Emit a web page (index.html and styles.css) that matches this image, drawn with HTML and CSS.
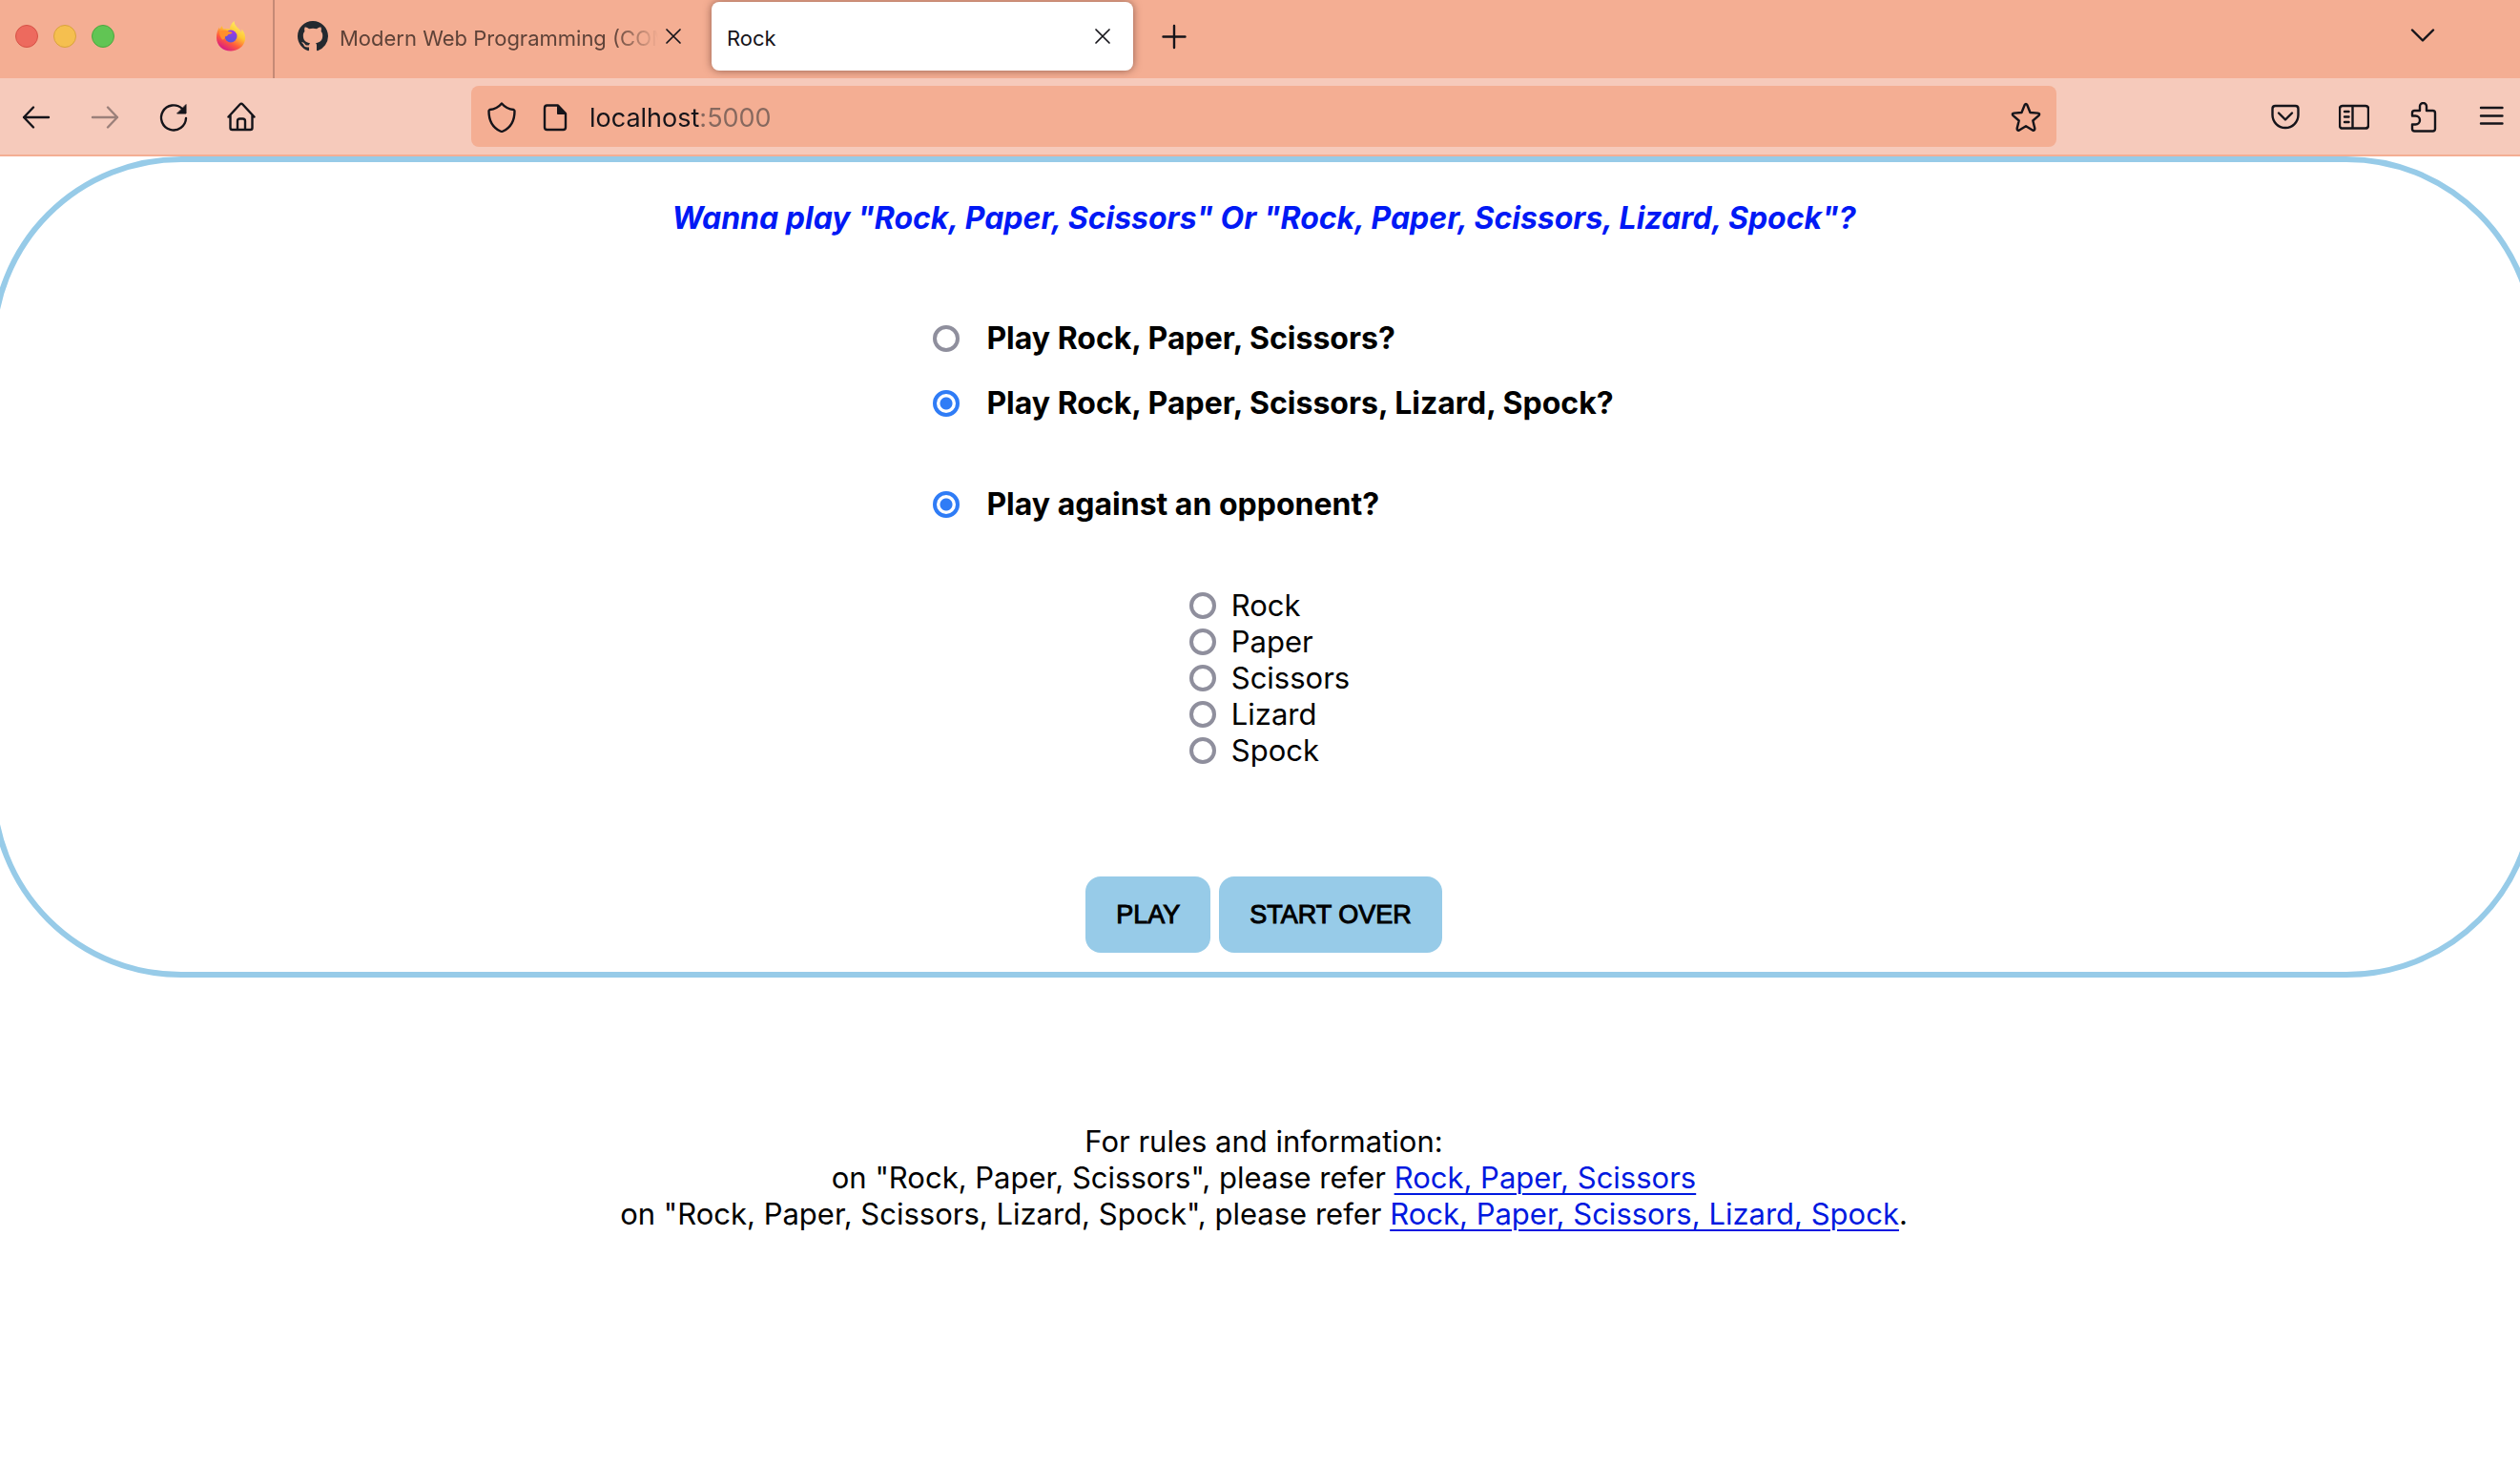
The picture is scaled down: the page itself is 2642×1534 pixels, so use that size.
FILE: index.html
```html
<!DOCTYPE html>
<html lang="en">
<head>
<meta charset="utf-8">
<title>Rock</title>
<link rel="stylesheet" href="styles.css">
</head>
<body>
<header class="browser">
  <div class="tabbar">
    <div class="window-controls">
      <button class="light light-close" aria-label="Close window"></button>
      <button class="light light-min" aria-label="Minimize window"></button>
      <button class="light light-zoom" aria-label="Zoom window"></button>
    </div>
    <button class="pinned" aria-label="Firefox View">
      <svg class="icon" viewBox="0 0 32 32">
        <defs>
          <linearGradient id="fire" x1="0.85" y1="0.05" x2="0.3" y2="1">
            <stop offset="0" stop-color="#fff36b"/>
            <stop offset="0.4" stop-color="#ffc533"/>
            <stop offset="0.7" stop-color="#ff5a3c"/>
            <stop offset="1" stop-color="#d6178a"/>
          </linearGradient>
          <radialGradient id="globe" cx="0.7" cy="0.1" r="0.9">
            <stop offset="0" stop-color="#a336e8"/>
            <stop offset="1" stop-color="#5a55d8"/>
          </radialGradient>
        </defs>
        <path fill="url(#fire)" d="M19.500 0C16 3 15 6 15 8.500C13 8 10.500 8 8.500 8.500C7.500 7.500 7 6.500 7 5C6 5.800 5.200 6.800 4.600 8.600C4.200 8 4 7.500 4 6.500C2 9.500 1 13 1 17.500C1 25.500 7.500 31.500 16 31.500C24 31.500 30.500 26 31 19C31.500 15 30 11 27 8.500C27.500 10 27.500 11 27 12C26 9 23.500 7.500 22 6C20.500 4 19.500 2.500 19.500 0Z"/>
        <circle cx="16" cy="16" r="6.500" fill="url(#globe)"/>
        <path fill="#ff8f2c" d="M4 11C7 9 12 9.500 14 11C16 11.200 17 11.500 17.500 12C17 13.500 15 13.500 13.500 14C12.500 15.500 11.500 16 10 16.500C10 19 8.500 19.500 7 19.500C5 17 3.800 14 4 11Z"/>
      </svg>
    </button>
    <div class="tabs">
      <div class="tab">
        <svg class="icon" viewBox="0 0 16 16"><path fill="#24292f" d="M8 0C3.580 0 0 3.580 0 8c0 3.540 2.290 6.530 5.470 7.590.4.070.55-.17.55-.38 0-.19-.01-.82-.01-1.490-2.010.37-2.530-.49-2.690-.94-.09-.23-.48-.94-.82-1.130-.28-.15-.68-.52-.01-.53.63-.01 1.080.58 1.230.82.72 1.210 1.870.87 2.330.66.070-.52.28-.87.51-1.070-1.780-.2-3.640-.89-3.640-3.950 0-.87.31-1.590.82-2.150-.08-.2-.36-1.020.08-2.120 0 0 .67-.21 2.200.82.64-.18 1.320-.27 2-.27s1.360.09 2 .27c1.530-1.040 2.200-.82 2.200-.82.44 1.100.16 1.920.08 2.120.51.56.82 1.270.82 2.150 0 3.070-1.870 3.750-3.650 3.950.29.25.54.73.54 1.480 0 1.070-.01 1.930-.01 2.200 0 .21.15.46.55.38A8.010 8.010 0 0 0 16 8c0-4.420-3.580-8-8-8z"/></svg>
        <span class="tab-title">Modern Web Programming (COM</span>
        <button class="tab-close" aria-label="Close tab"><svg class="icon line" viewBox="0 0 32 32"><path d="M9 9L23 23M23 9L9 23"/></svg></button>
      </div>
      <div class="tab tab-active">
        <span class="tab-title">Rock</span>
        <button class="tab-close" aria-label="Close tab"><svg class="icon line" viewBox="0 0 32 32"><path d="M9 9L23 23M23 9L9 23"/></svg></button>
      </div>
    </div>
    <button class="tool" aria-label="New tab"><svg class="icon line thick" viewBox="0 0 32 32"><path d="M16 5V28M4.500 16.500H27.500"/></svg></button>
    <button class="tool list-tabs" aria-label="List all tabs"><svg class="icon line thick" viewBox="0 0 32 32"><path d="M5 9.500L16 20.500L27 9.500"/></svg></button>
  </div>
  <div class="toolbar">
    <nav class="group">
      <button class="tool" aria-label="Back"><svg class="icon line thick" viewBox="0 0 32 32"><path d="M29 16H3M13 5.500L3 16L13 26.500"/></svg></button>
      <button class="tool" aria-label="Forward" disabled><svg class="icon line thick" viewBox="0 0 32 32"><path d="M3 16H29M19 5.500L29 16L19 26.500"/></svg></button>
      <button class="tool" aria-label="Reload"><svg class="icon line thick" viewBox="0 0 32 32"><path d="M29 17A13 13 0 1 1 25 7"/><path class="solid" d="M29 3V12H20Z"/></svg></button>
      <button class="tool" aria-label="Home"><svg class="icon line thick" viewBox="0 0 32 32"><path d="M1.500 15.500L13.500 2.500Q15 1 16.500 2.500L28.500 15.500M3.500 14V27Q3.500 29 5.500 29H24.500Q26.500 29 26.500 27V14M11 29V20Q11 17.500 13.500 17.500H16.500Q19 17.500 19 20V29"/></svg></button>
    </nav>
    <div class="urlbar">
      <svg class="icon line thick" viewBox="0 0 32 32"><path d="M16 1.500C13 5 8 7.500 3.500 8Q2.500 8.500 2.500 9.500C2.500 19 6 26.500 14.500 30.500Q16 31.200 17.500 30.500C26 26.500 29.500 19 29.500 9.500Q29.500 8.500 28.500 8C24 7.500 19 5 16 1.500Z"/></svg>
      <svg class="icon line thick" viewBox="0 0 32 32"><path d="M7.500 3.500H19L27 12V26.500Q27 29 24.500 29H7.500Q5 29 5 26.500V6.500Q5 3.500 7.500 3.500Z"/><path class="solid" d="M18.500 4V12.500H27Z"/></svg>
      <input class="address" type="text" value="localhost:5000" aria-label="Address">
      <svg class="icon line thick" viewBox="0 0 32 32"><path d="M14.600 3.200Q16 .8 17.400 3.200L20.500 11L28.500 11.600Q31.200 12 29.500 14.200L23.300 19.500L25.300 27.600Q25.500 30.300 23 29.500L16 25.300L9 29.500Q6.500 30.300 6.700 27.600L8.700 19.500L2.500 14.200Q.8 12 3.500 11.600L11.500 11Z"/></svg>
    </div>
    <div class="group">
      <button class="tool" aria-label="Save to Pocket"><svg class="icon line thick" viewBox="0 0 32 32"><path d="M5.500 4H26.500Q29.500 4 29.500 7V13.500A13.500 13.500 0 0 1 2.500 13.500V7Q2.500 4 5.500 4Z"/><path d="M9 11.500L16 18.500L23 11.500"/></svg></button>
      <button class="tool" aria-label="Sidebars"><svg class="icon line thick" viewBox="0 0 32 32"><path d="M4 4H28Q31 4 31 7V24.500Q31 27.500 28 27.500H4Q1 27.500 1 24.500V7Q1 4 4 4ZM14.500 4.500V27M6 10H10.500M6 15.500H10.500M6 21H10.500"/></svg></button>
      <button class="tool" aria-label="Extensions"><svg class="icon line thick" viewBox="0 0 32 32"><path d="M5 14V11.500Q5 9 7.500 9H13V4.500A3.500 3.500 0 0 1 20 4.500V9H26.500Q29 9 29 11.500V28Q29 30.500 26.500 30.500H7.500Q5 30.500 5 28V23.500H8.500A4.500 4.500 0 0 0 8.500 14.500H5"/></svg></button>
      <button class="tool" aria-label="Menu"><svg class="icon line thick" viewBox="0 0 32 32"><path d="M5 6H27.500M5 14.500H27.500M5 22.500H27.500"/></svg></button>
    </div>
  </div>
</header>

<main class="page">
  <form class="card">
    <h1 class="title">Wanna play "Rock, Paper, Scissors" Or "Rock, Paper, Scissors, Lizard, Spock"?</h1>
    <div class="options">
      <label class="option"><input class="radio" type="radio" name="game"> Play Rock, Paper, Scissors?</label>
      <label class="option"><input class="radio" type="radio" name="game" checked> Play Rock, Paper, Scissors, Lizard, Spock?</label>
      <label class="option option-opponent"><input class="radio" type="radio" name="opponent" checked> Play against an opponent?</label>
    </div>
    <div class="shots">
      <label class="shot"><input class="radio" type="radio" name="shot"> Rock</label>
      <label class="shot"><input class="radio" type="radio" name="shot"> Paper</label>
      <label class="shot"><input class="radio" type="radio" name="shot"> Scissors</label>
      <label class="shot"><input class="radio" type="radio" name="shot"> Lizard</label>
      <label class="shot"><input class="radio" type="radio" name="shot"> Spock</label>
    </div>
    <div class="actions">
      <button class="action" type="button">PLAY</button>
      <button class="action" type="reset">START OVER</button>
    </div>
  </form>
  <p class="rules">
    For rules and information:<br>
    on "Rock, Paper, Scissors", please refer <a href="#rps">Rock, Paper, Scissors</a><br>
    on "Rock, Paper, Scissors, Lizard, Spock", please refer <a href="#rpsls">Rock, Paper, Scissors, Lizard, Spock</a>.
  </p>
</main>
</body>
</html>
```
FILE: styles.css
```css
* {
  box-sizing: border-box;
}

body {
  margin: 0;
  background: #fff;
  color: #000;
  font: 31px/38px Inter, "Liberation Sans", sans-serif;
  overflow-x: hidden;
}

button,
input {
  margin: 0;
  padding: 0;
  border: 0;
  background: none;
  font: inherit;
  color: inherit;
}

/* Browser window */
.browser {
  background: #f4ae93;
  color: #15141a;
}

.icon {
  display: block;
  flex: none;
  width: 32px;
  height: 32px;
}

.line {
  fill: none;
  stroke: currentColor;
  stroke-width: 1.7;
  stroke-linecap: round;
  stroke-linejoin: round;
}

.thick {
  stroke-width: 2.4;
}

.solid {
  fill: currentColor;
  stroke-width: 1;
}

.tabbar {
  display: flex;
  align-items: flex-start;
  height: 82px;
}

.window-controls {
  display: flex;
  gap: 16px;
  padding: 26px 0 0 16px;
}

.light {
  width: 24px;
  height: 24px;
  border: 1px solid;
  border-radius: 50%;
}

.light-close {
  background: #ed6a5e;
  border-color: #d65246;
}

.light-min {
  background: #f5bf4f;
  border-color: #d9a23b;
}

.light-zoom {
  background: #61c554;
  border-color: #4ba73e;
}

.pinned {
  display: flex;
  align-items: center;
  justify-content: center;
  width: 88px;
  height: 76px;
  margin-left: 78px;
}

.tabs {
  display: flex;
  gap: 8px;
  height: 82px;
  padding: 2px 0 8px 8px;
  border-left: 2px solid #c48a76;
}

.tab {
  display: flex;
  align-items: center;
  width: 442px;
  padding: 0 16px;
  border-radius: 8px;
  font-size: 22px;
  line-height: 28px;
}

.tab-active {
  background: #fff;
  box-shadow: 0 0 8px rgba(80, 40, 30, 0.6);
}

.tab-title {
  flex: 1;
  min-width: 0;
  overflow: hidden;
  white-space: nowrap;
  padding-top: 4px;
}

.icon + .tab-title {
  margin-left: 12px;
  color: #5e4238;
  mask-image: linear-gradient(to left, transparent, #000 48px);
}

.tool {
  display: flex;
  align-items: center;
  justify-content: center;
  flex: none;
  width: 60px;
  height: 76px;
}

.tool:disabled {
  opacity: 0.4;
}

.tabs + .tool {
  margin-left: 13px;
}

.list-tabs {
  margin-left: auto;
  margin-right: 72px;
}

.toolbar {
  display: flex;
  align-items: center;
  justify-content: space-between;
  height: 82px;
  padding-left: 8px;
  background: #f6cabb;
  border-bottom: 2px solid #f4ae93;
}

.group {
  display: flex;
  gap: 12px;
  padding-top: 2px;
}

.urlbar {
  display: flex;
  align-items: center;
  flex: 0 1 1662px;
  height: 64px;
  padding: 2px 16px 0;
  gap: 24px;
  border-radius: 8px;
  background: #f4ae93;
}

.address {
  flex: 1;
  min-width: 0;
  height: 40px;
  margin-left: -4px;
  font-size: 27px;
  outline: 0;
  background: linear-gradient(to right, #15141a 117px, #86685e 117px);
  background-clip: text;
  -webkit-background-clip: text;
  -webkit-text-fill-color: transparent;
}

/* Game page */
.card {
  display: flex;
  flex-direction: column;
  align-items: center;
  margin: 0 -18px 0 -10px;
  padding: 40px 0 20px;
  border: 6px solid #97cbe8;
  border-radius: 200px;
}

.title {
  margin: 0;
  color: #0019f5;
  font-size: 32px;
  font-style: italic;
  font-weight: 700;
}

.options {
  display: flex;
  flex-direction: column;
  gap: 30px;
  margin-top: 88px;
  padding-left: 20px;
  font-size: 32px;
  font-weight: 700;
}

.option,
.shot {
  display: flex;
  align-items: center;
}

.option {
  gap: 28px;
}

.option-opponent {
  margin-top: 38px;
}

.radio {
  appearance: none;
  flex: none;
  width: 28px;
  height: 28px;
  border: 4px solid #8f8f9d;
  border-radius: 50%;
  background: #fff;
}

.radio:checked {
  border-color: #2f7cf6;
  background: radial-gradient(circle, #2f7cf6 6px, #fff 7px);
}

.shots {
  margin-top: 68px;
  padding-left: 12px;
}

.shot {
  gap: 16px;
}

.actions {
  display: flex;
  gap: 9px;
  margin-top: 113px;
}

.action {
  height: 80px;
  padding: 0 32px;
  border-radius: 16px;
  background: #97cbe8;
  color: #000;
  font: 27px/32px "Liberation Sans", Arial, sans-serif;
  -webkit-text-stroke: 1px #000;
}

.rules {
  margin: 153px 0 0;
  padding-left: 8px;
  text-align: center;
}

.rules a {
  color: #0019e0;
  text-decoration-thickness: 2px;
  text-underline-offset: 5px;
}
```
